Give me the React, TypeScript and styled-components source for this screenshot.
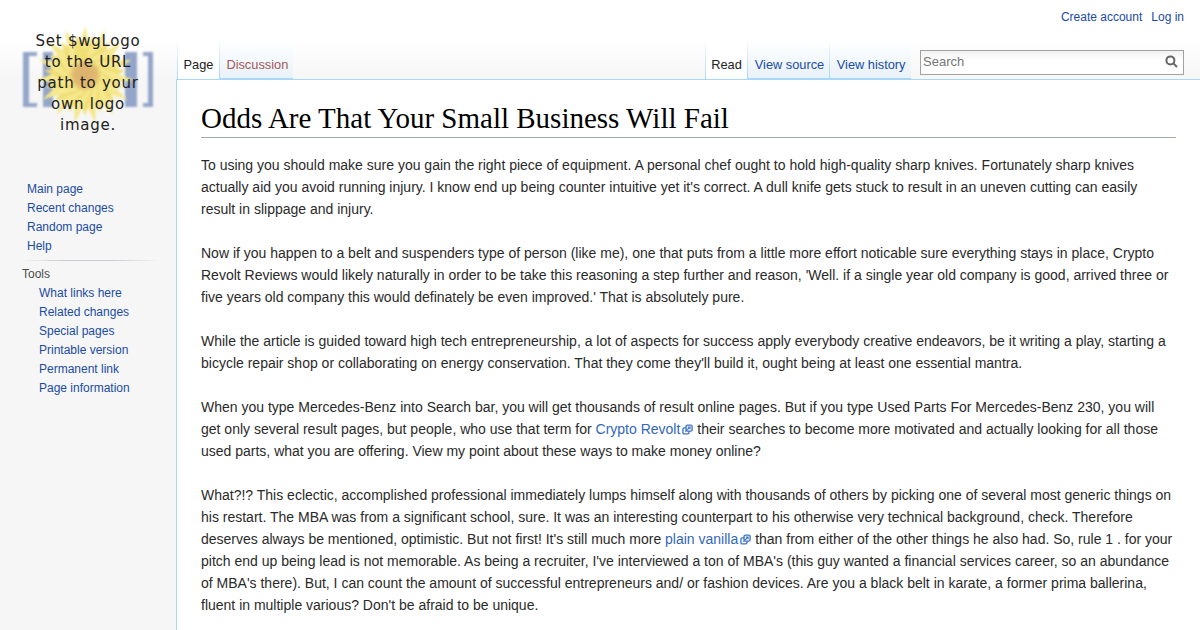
import React from 'react';
import styled, { createGlobalStyle } from 'styled-components';

const GlobalStyle = createGlobalStyle`
  html, body {
    margin: 0;
    height: 630px;
    overflow: hidden;
    background: #f6f6f6;
    font-family: 'Liberation Sans', Arial, sans-serif;
  }
`;

const Shell = styled.div`
  display: grid;
  grid-template-columns: 176px 1fr;
  height: 630px;
  overflow: hidden;
  background: linear-gradient(#fff 40px, #f6f6f6 80px);
`;

const Sidebar = styled.aside`
  display: flex;
  flex-direction: column;
`;

const LogoBox = styled.div`
  height: 180px;
  padding: 22px 0 0 18px;
  box-sizing: border-box;
`;

const NavList = styled.ul<{ $indent: number }>`
  list-style: none;
  margin: 0;
  padding: 0 0 0 ${(props) => props.$indent}px;
`;

const NavItem = styled.li`
  height: 19px;
  line-height: 19px;
  font-size: 12px;
`;

const NavLink = styled.a`
  color: #1a4ba3;
  text-decoration: none;
  cursor: pointer;
`;

const Divider = styled.div`
  height: 1px;
  margin: 4px 16px 0 20px;
  background: linear-gradient(to right, rgba(200, 204, 209, 0), #c8ccd1 33%, #c8ccd1 66%, rgba(200, 204, 209, 0));
`;

const ToolsHeading = styled.div`
  height: 19px;
  line-height: 19px;
  margin: 4px 0 0 22px;
  font-size: 12px;
  color: #4d4d4d;
`;

const Main = styled.div`
  display: flex;
  flex-direction: column;
  min-width: 0;
`;

const PersonalBar = styled.div`
  display: flex;
  justify-content: flex-end;
  gap: 9px;
  height: 40px;
  padding: 10px 16px 0 0;
  box-sizing: border-box;
  font-size: 12px;
  line-height: 14px;
`;

const TabRow = styled.div`
  display: flex;
  justify-content: space-between;
  height: 39px;
  padding-left: 1px;
`;

const TabGroup = styled.div`
  display: flex;
  height: 39px;
  background: linear-gradient(rgba(167, 215, 249, 0), #a7d7f9) right / 1px 100% no-repeat;
`;

const Tab = styled.a<{ $selected?: boolean; $missing?: boolean }>`
  display: block;
  padding: 17px ${(props) => (props.$selected ? '5.5px' : '5px')} 0 ${(props) => (props.$selected ? '6.5px' : '7.5px')};
  box-sizing: border-box;
  height: 39px;
  font-size: 12.8px;
  line-height: 16px;
  text-decoration: none;
  cursor: pointer;
  color: ${(props) => (props.$selected ? '#222' : props.$missing ? '#a55858' : '#1a4ba3')};
  background:
    linear-gradient(rgba(167, 215, 249, 0), #a7d7f9) left / 1px 100% no-repeat,
    ${(props) => (props.$selected ? '#fff' : 'linear-gradient(#fff, #e8f2f8)')};
  border-bottom: ${(props) => (props.$selected ? 'none' : '1px solid #a7d7f9')};
`;

const RightSide = styled.div`
  display: flex;
  align-items: flex-start;
`;

const SearchBox = styled.div`
  display: flex;
  align-items: center;
  justify-content: space-between;
  width: 264px;
  height: 25px;
  box-sizing: border-box;
  margin: 10px 16px 0 9.5px;
  padding: 0 5px 2px 2px;
  border: 1px solid #a2a2a2;
  background: linear-gradient(#f1f1f1, #fff 40%);
  font-size: 13px;
  color: #757575;
`;

const Content = styled.main`
  flex: 1;
  min-height: 0;
  padding: 20px 24px 0 24px;
  background: #fff;
  border: 1px solid #a7d7f9;
  border-right: none;
  color: #2a2a2a;
  font-size: 14px;
  line-height: 22px;
`;

const Title = styled.h1`
  margin: 0 0 16px 0;
  font-family: 'Liberation Serif', 'Times New Roman', serif;
  font-size: 29px;
  font-weight: normal;
  line-height: 37.4px;
  color: #000;
  border-bottom: 1px solid #a2a9b1;
`;

const Paragraph = styled.p`
  margin: 0 0 22px 0;
  padding-right: 1px;
`;

const ExternalLink = styled.a`
  color: #36b;
  text-decoration: none;
  cursor: pointer;
`;

const ExternalMark = styled.svg`
  width: 11px;
  height: 11px;
  margin-left: 2px;
  vertical-align: -1px;
`;

const ExtIcon = () => (
  <ExternalMark viewBox="0 0 12 12" fill="none" stroke="#3f74c4" strokeWidth="1.5">
    <rect x="1" y="4.2" width="6.6" height="6.6" rx="1.4" />
    <rect x="4.4" y="1.2" width="6.6" height="6.6" rx="1.4" fill="#fff" />
    <path d="M3.6 8.4 8.6 3.4M6.2 3.2h2.6v2.6" strokeWidth="1.2" />
  </ExternalMark>
);

const Petals = () => {
  const petals = Array.from({ length: 30 }, (_, i) => {
    const angle = (i * 360) / 30;
    const length = i % 2 === 0 ? 49 : 41;
    return (
      <path
        key={i}
        d={`M-10 -10 L0 ${-length} L10 -10 Z`}
        fill={i % 2 === 0 ? '#f5e88e' : '#f0df74'}
        transform={`rotate(${angle})`}
      />
    );
  });
  return <g transform="translate(67 53)">{petals}</g>;
};

const Logo = () => (
  <svg width="140" height="120" viewBox="0 0 140 120" fontFamily="'DejaVu Sans', sans-serif">
    <defs>
      <filter id="soft" x="-20%" y="-20%" width="140%" height="140%">
        <feGaussianBlur stdDeviation="1" />
      </filter>
      <radialGradient id="disk">
        <stop offset="0" stopColor="#dcb06e" />
        <stop offset="0.7" stopColor="#e0b86f" />
        <stop offset="1" stopColor="#f0dc7c" />
      </radialGradient>
    </defs>
    <g filter="url(#soft)" fill="#93a5c8">
      <path d="M5 30H19V34H11V81H19V85H5Z" />
      <path d="M135 30H125V34H130V81H125V85H135Z" />
      <rect x="25" y="30" width="10" height="55" />
      <rect x="107" y="30" width="12" height="55" />
    </g>
    <g filter="url(#soft)">
      <Petals />
      <circle cx="67" cy="53" r="16" fill="url(#disk)" />
    </g>
    <g fontSize="15" letterSpacing="0.75" fill="#222" textAnchor="middle">
      <text x="70" y="24">Set $wgLogo</text>
      <text x="70" y="45">to the URL</text>
      <text x="70" y="66">path to your</text>
      <text x="70" y="87">own logo</text>
      <text x="70" y="108">image.</text>
    </g>
  </svg>
);

const SearchIcon = () => (
  <svg width="13" height="13" viewBox="0 0 13 13" fill="none" stroke="#666" strokeWidth="2">
    <circle cx="5.4" cy="5.4" r="4" />
    <path d="M8.4 8.4 12 12" />
  </svg>
);

const mainLinks = ['Main page', 'Recent changes', 'Random page', 'Help'];
const toolLinks = [
  'What links here',
  'Related changes',
  'Special pages',
  'Printable version',
  'Permanent link',
  'Page information',
];

const App: React.FC = () => (
  <React.Fragment>
    <GlobalStyle />
    <Shell>
      <Sidebar>
        <LogoBox>
          <Logo />
        </LogoBox>
        <NavList $indent={27}>
          {mainLinks.map((link) => (
            <NavItem key={link}>
              <NavLink>{link}</NavLink>
            </NavItem>
          ))}
        </NavList>
        <Divider />
        <ToolsHeading>Tools</ToolsHeading>
        <NavList $indent={39}>
          {toolLinks.map((link) => (
            <NavItem key={link}>
              <NavLink>{link}</NavLink>
            </NavItem>
          ))}
        </NavList>
      </Sidebar>
      <Main>
        <PersonalBar>
          <NavLink>Create account</NavLink>
          <NavLink>Log in</NavLink>
        </PersonalBar>
        <TabRow>
          <TabGroup>
            <Tab $selected>Page</Tab>
            <Tab $missing>Discussion</Tab>
          </TabGroup>
          <RightSide>
            <TabGroup>
              <Tab $selected>Read</Tab>
              <Tab>View source</Tab>
              <Tab>View history</Tab>
            </TabGroup>
            <SearchBox>
              Search
              <SearchIcon />
            </SearchBox>
          </RightSide>
        </TabRow>
        <Content>
          <Title>Odds Are That Your Small Business Will Fail</Title>
          <Paragraph>
            To using you should make sure you gain the right piece of equipment. A personal chef ought to hold
            high-quality sharp knives. Fortunately sharp knives actually aid you avoid running injury. I know end up
            being counter intuitive yet it's correct. A dull knife gets stuck to result in an uneven cutting can easily
            result in slippage and injury.
          </Paragraph>
          <Paragraph>
            Now if you happen to a belt and suspenders type of person (like me), one that puts from a little more effort
            noticable sure everything stays in place, Crypto Revolt Reviews would likely naturally in order to be take
            this reasoning a step further and reason, 'Well. if a single year old company is good, arrived three or five
            years old company this would definately be even improved.' That is absolutely pure.
          </Paragraph>
          <Paragraph>
            While the article is guided toward high tech entrepreneurship, a lot of aspects for success apply everybody
            creative endeavors, be it writing a play, starting a bicycle repair shop or collaborating on energy
            conservation. That they come they'll build it, ought being at least one essential mantra.
          </Paragraph>
          <Paragraph>
            When you type Mercedes-Benz into Search bar, you will get thousands of result online pages. But if you type
            Used Parts For Mercedes-Benz 230, you will get only several result pages, but people, who use that term for{' '}
            <ExternalLink>
              Crypto Revolt
              <ExtIcon />
            </ExternalLink>{' '}
            their searches to become more motivated and actually looking for all those used parts, what you are
            offering. View my point about these ways to make money online?
          </Paragraph>
          <Paragraph>
            What?!? This eclectic, accomplished professional immediately lumps himself along with thousands of others by
            picking one of several most generic things on his restart. The MBA was from a significant school, sure. It
            was an interesting counterpart to his otherwise very technical background, check. Therefore deserves always
            be mentioned, optimistic. But not first! It's still much more{' '}
            <ExternalLink>
              plain vanilla
              <ExtIcon />
            </ExternalLink>{' '}
            than from either of the other things he also had. So, rule 1 . for your pitch end up being lead is not
            memorable. As being a recruiter, I've interviewed a ton of MBA's (this guy wanted a financial services
            career, so an abundance of MBA's there). But, I can count the amount of successful entrepreneurs and/ or
            fashion devices. Are you a black belt in karate, a former prima ballerina, fluent in multiple various? Don't
            be afraid to be unique.
          </Paragraph>
        </Content>
      </Main>
    </Shell>
  </React.Fragment>
);

export default App;
